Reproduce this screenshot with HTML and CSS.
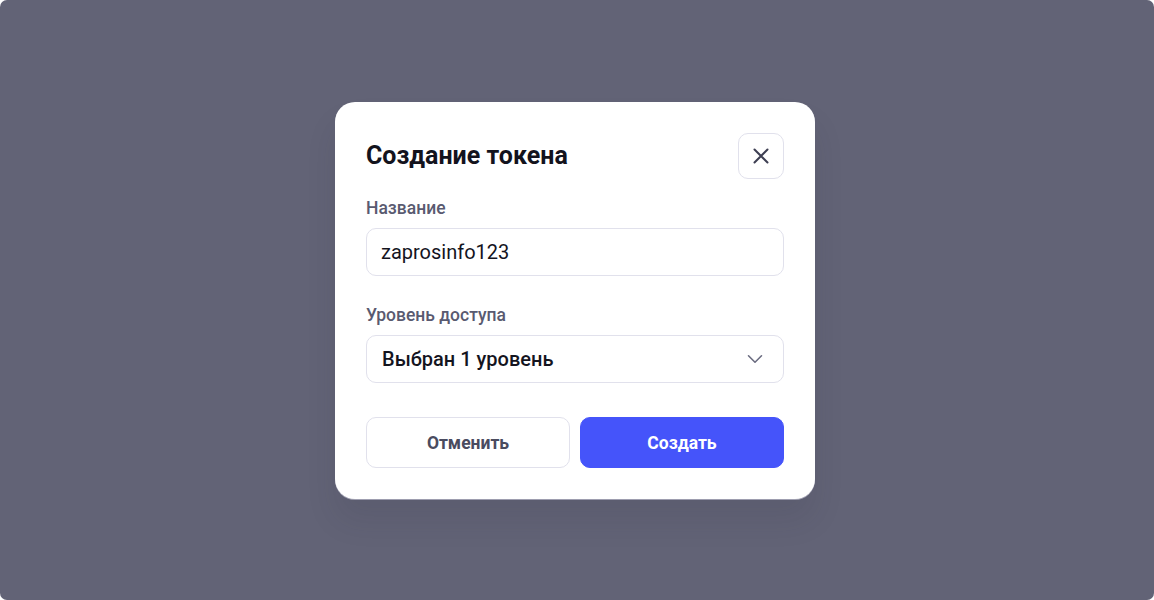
FILE: index.html
```html
<!DOCTYPE html>
<html lang="ru">
<head>
<meta charset="utf-8">
<title>Создание токена</title>
<link rel="stylesheet" href="styles.css">
</head>
<body>
<div class="screen">
  <div class="modal">
    <div class="modal-header">
      <h2 class="modal-title">Создание токена</h2>
      <button class="close-btn" type="button" aria-label="Закрыть">
        <svg width="16" height="16" viewBox="0 0 16 16" fill="none"><path d="M1.5 1.5 L14.5 14.5 M14.5 1.5 L1.5 14.5" stroke="#3d3e52" stroke-width="2" stroke-linecap="round"/></svg>
      </button>
    </div>
    <div class="field">
      <label class="field-label">Название</label>
      <div class="input">zaprosinfo123</div>
    </div>
    <div class="field">
      <label class="field-label">Уровень доступа</label>
      <div class="input select">
        <span class="select-value">Выбран 1 уровень</span>
        <svg class="chevron" width="16" height="10" viewBox="0 0 16 10" fill="none"><path d="M1.5 1.8 L8 8.2 L14.5 1.8" stroke="#6b6c80" stroke-width="1.6" stroke-linecap="round" stroke-linejoin="round"/></svg>
      </div>
    </div>
    <div class="actions">
      <button class="btn btn-secondary" type="button">Отменить</button>
      <button class="btn btn-primary" type="button">Создать</button>
    </div>
  </div>
</div>
</body>
</html>
```
FILE: styles.css
```css
* { box-sizing: border-box; }
html, body { margin: 0; padding: 0; background: #ffffff; }
body { font-family: Roboto, "Liberation Sans", sans-serif; }

.screen {
  width: 1154px;
  height: 600px;
  background: #626376;
  border-radius: 7px;
  display: flex;
  align-items: center;
  justify-content: center;
  padding-right: 4px;
  padding-top: 1px;
}

.modal {
  width: 480px;
  background: #ffffff;
  border-radius: 20px;
  padding: 31px;
  box-shadow: 0 22px 30px rgba(40, 40, 60, 0.10), 0 1px 0 rgba(220, 220, 235, 0.6);
}

.modal-header {
  display: flex;
  align-items: center;
  justify-content: space-between;
  margin-bottom: 19px;
}

.modal-title {
  margin: 0;
  font-size: 25px;
  font-weight: 700;
  color: #13131d;
  line-height: 30px;
}

.close-btn {
  width: 46px;
  height: 46px;
  border: 1px solid #e1e1ec;
  border-radius: 10px;
  background: #ffffff;
  display: flex;
  align-items: center;
  justify-content: center;
  padding: 0;
}

.field { display: flex; flex-direction: column; }
.field + .field { margin-top: 29px; }

.field-label {
  font-size: 17.5px;
  font-weight: 500;
  line-height: 20px;
  color: #595a70;
  margin-bottom: 10px;
}

.input {
  height: 48px;
  border: 1px solid #e1e1ec;
  border-radius: 10px;
  padding: 0 14px;
  display: flex;
  align-items: center;
  font-size: 20px;
  color: #14141e;
}

.select { justify-content: space-between; padding-left: 15px; padding-right: 20px; }
.select-value { font-weight: 500; }

.actions {
  display: grid;
  grid-template-columns: 1fr 1fr;
  gap: 10px;
  margin-top: 34px;
}

.btn {
  height: 51px;
  border-radius: 10px;
  font-family: Roboto, "Liberation Sans", sans-serif;
  font-size: 17.5px;
  font-weight: 700;
}

.btn-secondary {
  background: #ffffff;
  border: 1px solid #e1e1ec;
  color: #4a4b5f;
}

.btn-primary {
  background: #4554fa;
  border: 1px solid #4554fa;
  color: #ffffff;
}
```
